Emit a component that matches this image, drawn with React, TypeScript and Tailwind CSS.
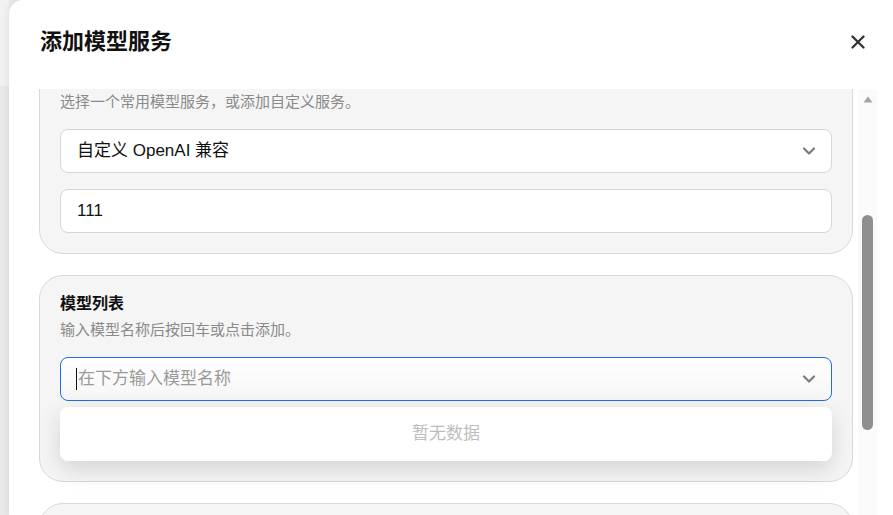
import { X, ChevronDown } from 'lucide-react';

const font = "font-['Liberation_Sans','Noto_Sans_CJK_SC',sans-serif]";

function SelectBox({ children, focused }: { children: React.ReactNode; focused?: boolean }) {
  return (
    <div
      className={
        'flex h-[44px] items-center justify-between rounded-[8px] border pl-[16px] pr-[12px] ' +
        (focused ? 'border-[#1f6ee6] bg-gradient-to-b from-white to-[#f6f6f6]' : 'border-[#d6d6d6] bg-white')
      }
    >
      <div className="flex items-center text-[17px]">{children}</div>
      <ChevronDown className="h-[20px] w-[20px] text-[#7a7a7a]" strokeWidth={2.6} />
    </div>
  );
}

export default function App() {
  return (
    <div className={`flex h-[515px] w-[893px] overflow-hidden bg-[#e9e9e9] ${font}`}>
      <div className="flex w-[9px] shrink-0 flex-col">
        <div className="h-[86px] bg-[#f1f1f1]" />
        <div className="flex-1 bg-[#e8e8e8]" />
      </div>

      <div className="flex flex-1 flex-col rounded-tl-[14px] bg-white shadow-[-2px_0_6px_rgba(0,0,0,0.06)]">
        <div className="flex h-[89px] shrink-0 items-center justify-between pb-[6px] pl-[31px] pr-[24px]">
          <h2 className="text-[22px] font-bold text-[#111]">添加模型服务</h2>
          <X className="h-[22px] w-[22px] text-[#333]" strokeWidth={2.6} />
        </div>

        <div className="flex min-h-0 flex-1">
          <div className="min-w-0 flex-1 overflow-hidden pl-[30px] pr-[5px]">
            <div className="-mt-[42px] flex flex-col gap-[21px]">
              <section className="rounded-[24px] border border-[#d9d9d9] bg-[#f5f5f5] px-[20px] pb-[20px] pt-[44px]">
                <p className="text-[15px] leading-[20px] text-[#8a8a8a]">
                  选择一个常用模型服务，或添加自定义服务。
                </p>
                <div className="mt-[17px] flex flex-col gap-[16px]">
                  <SelectBox>
                    <span className="text-[#111]">自定义 OpenAI 兼容</span>
                  </SelectBox>
                  <div className="flex h-[44px] items-center rounded-[8px] border border-[#d6d6d6] bg-white pl-[16px] text-[17px] text-[#111]">
                    111
                  </div>
                </div>
              </section>

              <section className="rounded-[24px] border border-[#d9d9d9] bg-[#f5f5f5] px-[20px] pb-[20px] pt-[17px]">
                <h3 className="text-[16px] font-bold leading-[22px] text-[#111]">模型列表</h3>
                <p className="mt-[5px] text-[15px] leading-[20px] text-[#8a8a8a]">
                  输入模型名称后按回车或点击添加。
                </p>
                <div className="mt-[17px]">
                  <SelectBox focused>
                    <span className="-ml-[1px] mr-[1px] inline-block h-[22px] w-px bg-[#111]" />
                    <span className="text-[#9a9a9a]">在下方输入模型名称</span>
                  </SelectBox>
                  <div className="mt-[6px] flex h-[54px] items-center justify-center rounded-[8px] bg-white text-[17px] text-[#bdbdbd] shadow-[0_8px_24px_rgba(0,0,0,0.14)]">
                    暂无数据
                  </div>
                </div>
              </section>

              <section className="h-[120px] rounded-[24px] border border-[#d9d9d9] bg-[#f5f5f5]" />
            </div>
          </div>

          <div className="flex w-[19px] shrink-0 flex-col items-center bg-[#fafafa]">
            <svg className="mt-[7px]" width="10" height="7" viewBox="0 0 10 7">
              <path d="M5 0.5 L9.5 6.5 L0.5 6.5 Z" fill="#a3a3a3" />
            </svg>
            <div className="mt-[112px] h-[215px] w-[11px] rounded-full bg-[#8f8f8f]" />
          </div>
          <div className="w-[16px] shrink-0" />
        </div>
      </div>
    </div>
  );
}
